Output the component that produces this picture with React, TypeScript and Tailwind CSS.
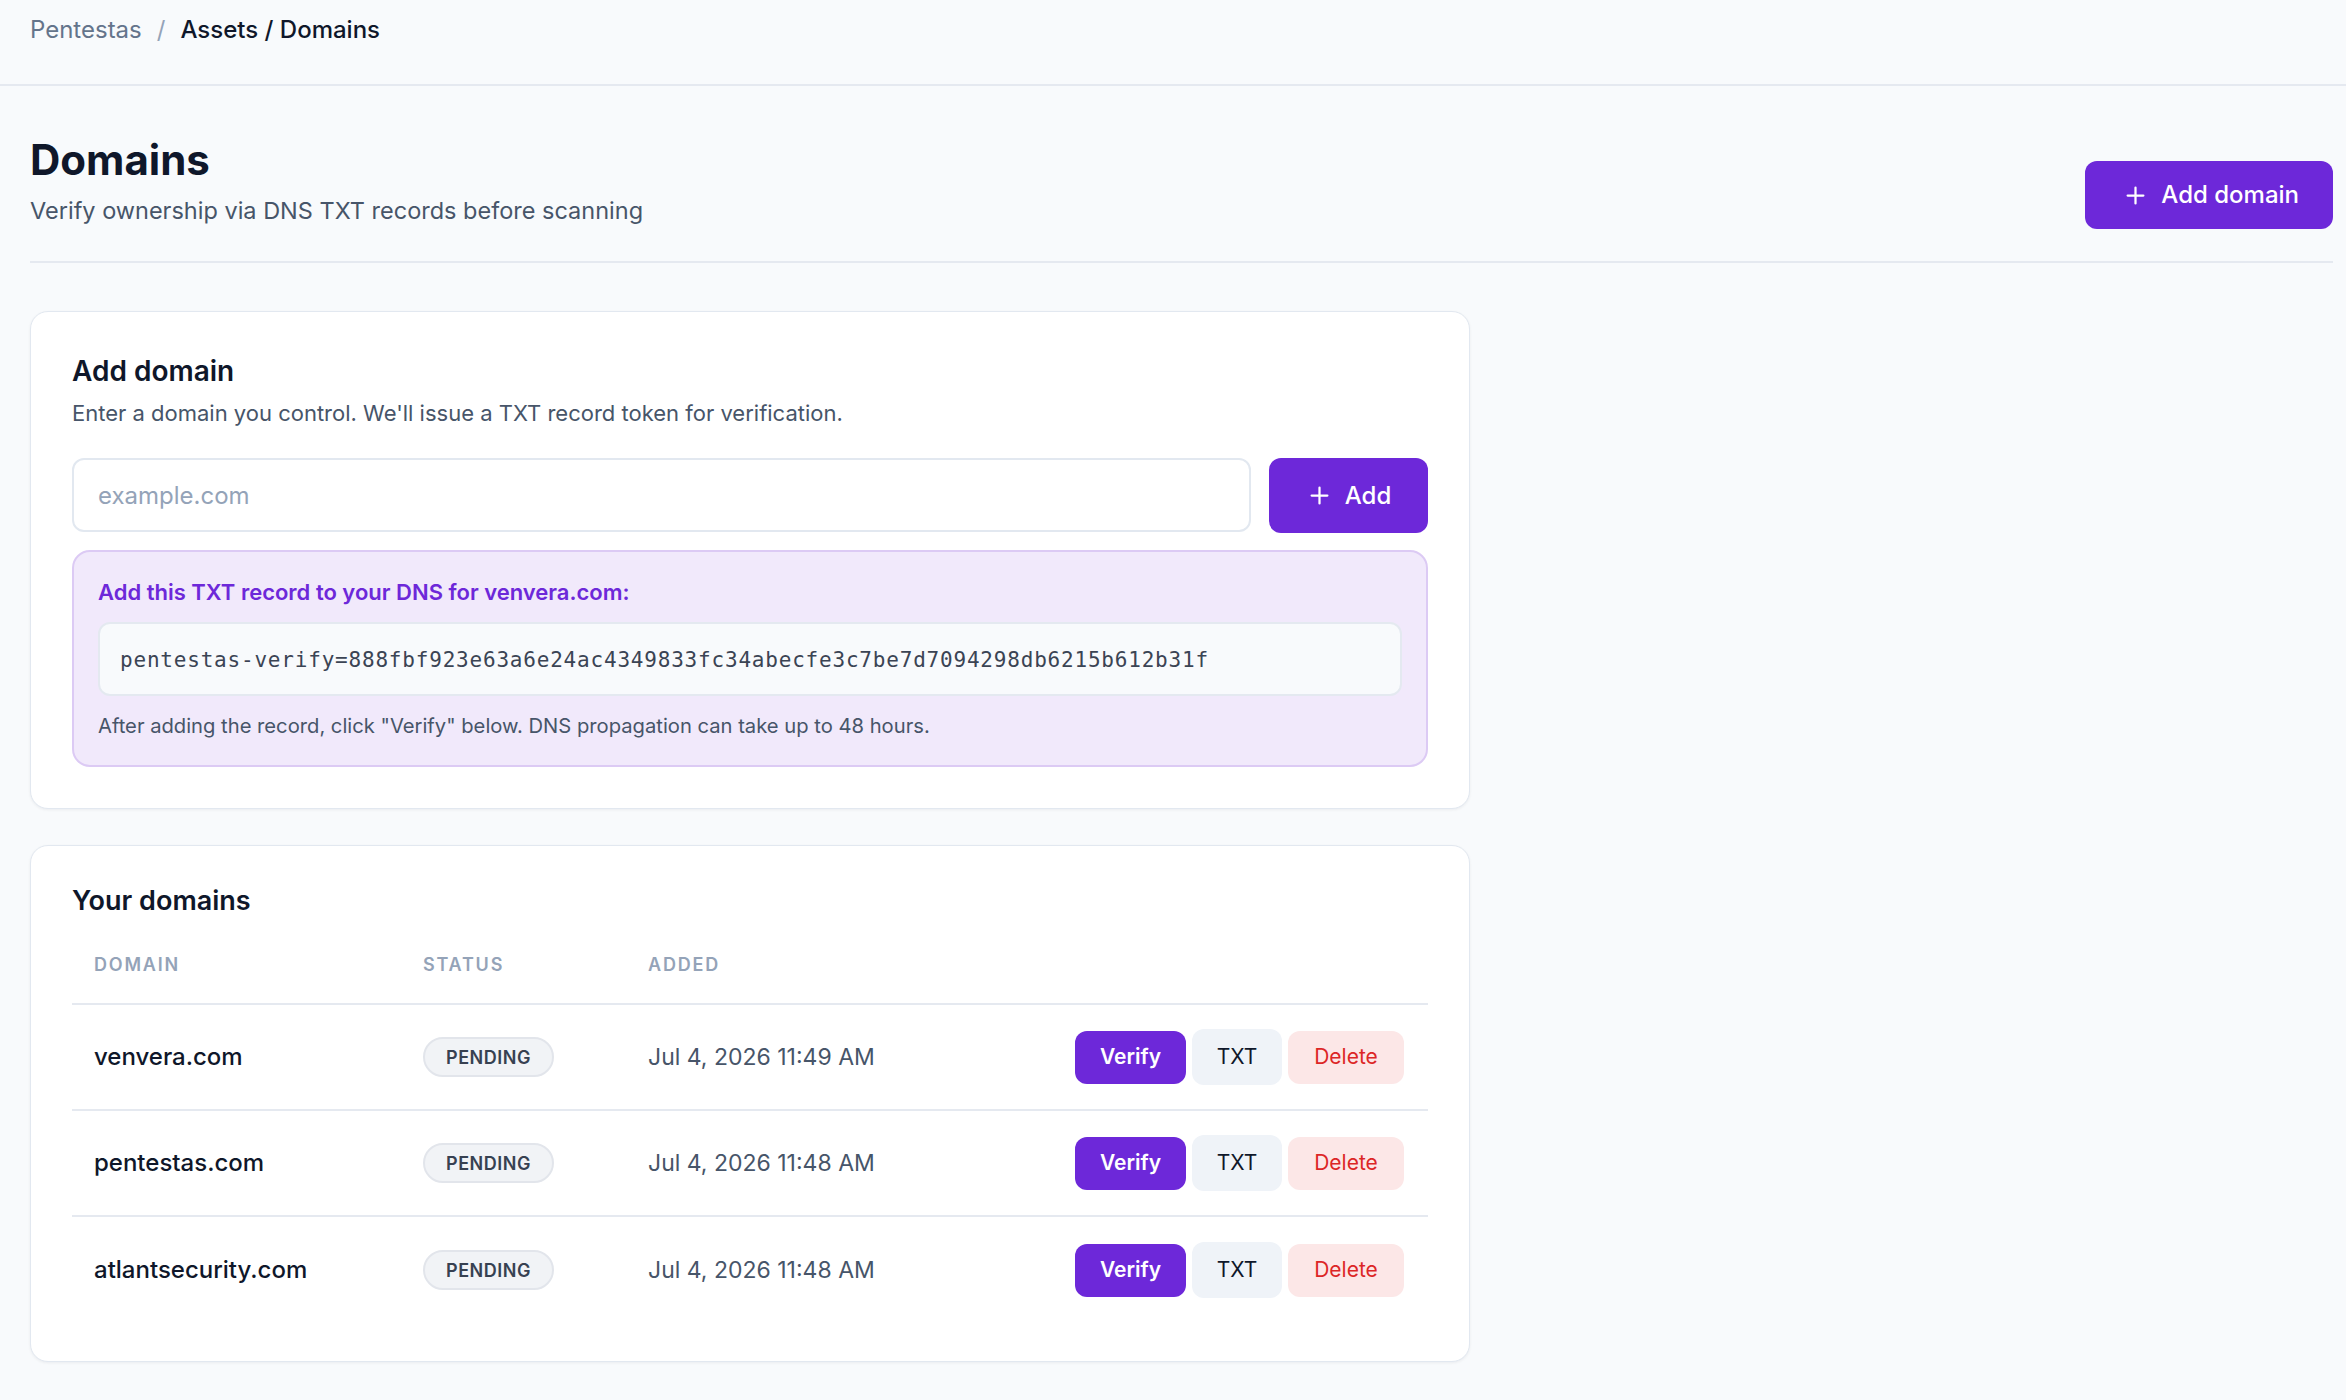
import { Plus } from 'lucide-react';

const domains = [
  { name: 'venvera.com', added: 'Jul 4, 2026 11:49 AM' },
  { name: 'pentestas.com', added: 'Jul 4, 2026 11:48 AM' },
  { name: 'atlantsecurity.com', added: 'Jul 4, 2026 11:48 AM' },
];

const token = 'pentestas-verify=888fbf923e63a6e24ac4349833fc34abecfe3c7be7d7094298db6215b612b31f';

export default function App() {
  return (
    <div className="min-h-screen bg-[#f8fafc] font-['Inter',sans-serif] text-[#0f172a]">
      {/* top bar */}
      <div className="h-[86px] border-b-2 border-[#e5e9f0] px-[30px] pt-[12px]">
        <nav className="flex items-center gap-[15px] text-[24px] leading-[36px]">
          <span className="text-[#64748b]">Pentestas</span>
          <span className="text-[#94a3b8]">/</span>
          <span className="font-medium text-[#0f172a]">Assets / Domains</span>
        </nav>
      </div>

      <main className="pl-[30px] pr-[13px] pb-[40px]">
        <header className="flex items-end justify-between border-b-2 border-[#e5e9f0] pt-[51px] pb-[32px]">
          <div>
            <h1 className="text-[42px] font-bold leading-[46px] text-[#0f172a]">Domains</h1>
            <p className="mt-[10px] text-[23.5px] leading-[36px] text-[#475569]">
              Verify ownership via DNS TXT records before scanning
            </p>
          </div>
          <button className="flex h-[68px] items-center gap-[12px] rounded-[12px] bg-[#6d28d9] pl-[37px] pr-[34px] text-[24px] font-medium text-white">
            <Plus size={27} strokeWidth={2} />
            Add domain
          </button>
        </header>

        {/* add domain card */}
        <section className="mt-[48px] w-[1440px] rounded-[18px] border border-[#e2e8f0] bg-white p-[41px] shadow-[0_1px_3px_rgba(15,23,42,0.06)]">
          <h2 className="text-[28px] font-semibold leading-[36px] text-[#0f172a]">Add domain</h2>
          <p className="mt-[9px] text-[22px] leading-[30px] text-[#475569]">
            Enter a domain you control. We'll issue a TXT record token for verification.
          </p>

          <div className="mt-[30px] flex gap-[18px]">
            <input
              placeholder="example.com"
              className="h-[74px] flex-1 rounded-[12px] border-2 border-[#e2e8f0] bg-white px-[24px] text-[24px] text-[#0f172a] outline-none placeholder:text-[#94a3b8]"
            />
            <button className="flex h-[75px] w-[159px] items-center justify-center gap-[12px] rounded-[12px] bg-[#6d28d9] text-[24px] font-medium text-white">
              <Plus size={27} strokeWidth={2} />
              Add
            </button>
          </div>

          <div className="mt-[17px] rounded-[18px] border-2 border-[#dccaf4] bg-[#f1e9fb] px-[24px] pt-[25px] pb-[24px]">
            <p className="text-[22px] font-semibold leading-[30px] text-[#6d28d9]">
              Add this TXT record to your DNS for venvera.com:
            </p>
            <div className="mt-[15px] flex h-[74px] items-center rounded-[12px] border-2 border-[#e4e9f0] bg-[#f8fafc] px-[20px]">
              <code className="pt-[3px] font-['DejaVu_Sans_Mono',monospace] text-[21px] tracking-[0.8px] text-[#3b4454]">{token}</code>
            </div>
            <p className="mt-[15px] text-[20.2px] leading-[30px] text-[#475569]">
              After adding the record, click "Verify" below. DNS propagation can take up to 48 hours.
            </p>
          </div>
        </section>

        {/* domains list */}
        <section className="mt-[36px] w-[1440px] rounded-[18px] border border-[#e2e8f0] bg-white px-[41px] pt-[40px] pb-[38px] shadow-[0_1px_3px_rgba(15,23,42,0.06)]">
          <h2 className="text-[27px] font-semibold leading-[30px] text-[#0f172a]">Your domains</h2>

          <div className="mt-[12px]">
            <div className="grid grid-cols-[329px_225px_1fr_auto] border-b-2 border-[#e5e9f0] pt-[23px] pb-[25px] text-[18px] font-semibold uppercase leading-[27px] tracking-[0.1em] text-[#94a3b8]">
              <div className="px-[22px]">Domain</div>
              <div className="px-[22px]">Status</div>
              <div className="px-[22px]">Added</div>
              <div />
            </div>

            {domains.map((d, i) => (
              <div
                key={d.name}
                className={
                  'grid h-[106px] grid-cols-[329px_225px_1fr_auto] items-center ' +
                  (i < domains.length - 1 ? 'border-b-2 border-[#e5e9f0]' : '')
                }
              >
                <div className="px-[22px] text-[24px] font-medium text-[#0f172a]">{d.name}</div>
                <div className="px-[22px]">
                  <span className="inline-flex h-[40px] items-center rounded-full border-2 border-[#e2e5eb] bg-[#f1f3f6] px-[21px] text-[18px] font-semibold tracking-[0.03em] text-[#374151]">
                    PENDING
                  </span>
                </div>
                <div className="px-[22px] text-[23px] text-[#475569]">{d.added}</div>
                <div className="flex items-center gap-[6px] pr-[24px]">
                  <button className="h-[53px] w-[111px] rounded-[12px] bg-[#6d28d9] text-[21px] font-semibold text-white">
                    Verify
                  </button>
                  <button className="h-[56px] w-[90px] rounded-[12px] bg-[#eff3f8] text-[21px] text-[#0f172a]">
                    TXT
                  </button>
                  <button className="h-[53px] w-[116px] rounded-[12px] bg-[#fce7e7] text-[21px] text-[#dc2626]">
                    Delete
                  </button>
                </div>
              </div>
            ))}
          </div>
        </section>
      </main>
    </div>
  );
}
